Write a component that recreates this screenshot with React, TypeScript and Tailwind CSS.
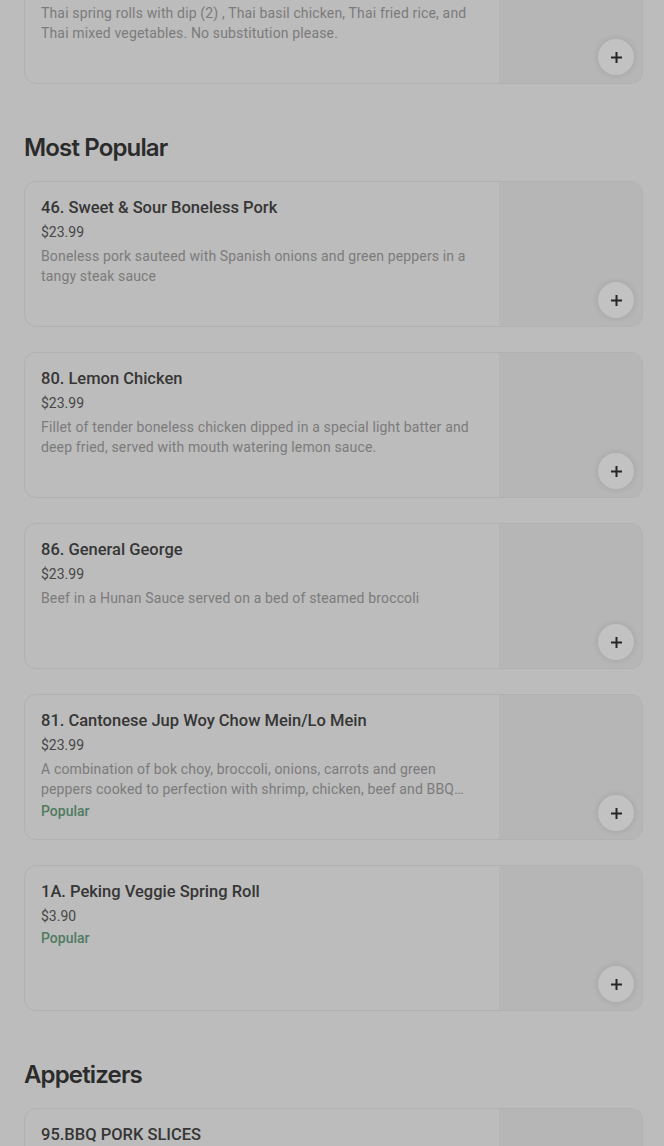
import React from "react";

type Item = {
  name: string;
  price: string;
  description?: string;
  popular?: boolean;
};

const sections: { title?: string; items: Item[] }[] = [
  {
    items: [
      {
        name: "Thai Dinner Combo",
        price: "$45.99",
        description:
          "Thai spring rolls with dip (2) , Thai basil chicken, Thai fried rice, and Thai mixed vegetables. No substitution please.",
      },
    ],
  },
  {
    title: "Most Popular",
    items: [
      {
        name: "46. Sweet & Sour Boneless Pork",
        price: "$23.99",
        description:
          "Boneless pork sauteed with Spanish onions and green peppers in a tangy steak sauce",
      },
      {
        name: "80. Lemon Chicken",
        price: "$23.99",
        description:
          "Fillet of tender boneless chicken dipped in a special light batter and deep fried, served with mouth watering lemon sauce.",
      },
      {
        name: "86. General George",
        price: "$23.99",
        description: "Beef in a Hunan Sauce served on a bed of steamed broccoli",
      },
      {
        name: "81. Cantonese Jup Woy Chow Mein/Lo Mein",
        price: "$23.99",
        description:
          "A combination of bok choy, broccoli, onions, carrots and green peppers cooked to perfection with shrimp, chicken, beef and BBQ pork.",
        popular: true,
      },
      {
        name: "1A. Peking Veggie Spring Roll",
        price: "$3.90",
        popular: true,
      },
    ],
  },
  {
    title: "Appetizers",
    items: [
      {
        name: "95.BBQ PORK SLICES",
        price: "$12.99",
        description: "Sliced barbecued pork served with hot mustard and sesame seeds.",
      },
    ],
  },
];

function PlusIcon() {
  return (
    <svg width="13" height="13" viewBox="0 0 13 13" fill="none">
      <path d="M6.5 1v11M1 6.5h11" stroke="#262626" strokeWidth="2" />
    </svg>
  );
}

function ItemCard({ item }: { item: Item }) {
  return (
    <div className="flex h-[146px] overflow-hidden rounded-xl border border-[#b1b1b1] bg-[#bcbcbc]">
      <div className="min-w-0 flex-1 px-4 pt-4">
        <div className="text-[16.5px] font-medium leading-5 text-[#363636]">{item.name}</div>
        <div className="mt-1 text-[14px] leading-5 text-[#474747]">{item.price}</div>
        {item.description && (
          <div className="mt-1 line-clamp-2 text-[14px] leading-5 tracking-[0.15px] text-[#7b7b7b]">
            {item.description}
          </div>
        )}
        {item.popular && (
          <div className="mt-0.5 text-[14px] font-medium leading-5 text-[#507a61]">
            Popular
          </div>
        )}
      </div>
      <div className="relative w-[143px] shrink-0 bg-[#b6b6b6]">
        <button className="absolute bottom-2 right-2 flex h-9 w-9 items-center justify-center rounded-full bg-[#c2c2c2] shadow-[0_0_6px_rgba(0,0,0,0.12)]">
          <PlusIcon />
        </button>
      </div>
    </div>
  );
}

export default function App() {
  return (
    <div
      className="h-[1146px] overflow-hidden bg-[#bcbcbc]"
      style={{ fontFamily: "Roboto, 'Liberation Sans', sans-serif" }}
    >
      <div className="-mt-[62px] pl-6 pr-[21px]">
        {sections.map((section, si) => (
          <div key={si}>
            {section.title && (
              <h2
                className="mt-12 mb-[17px] text-[24px] font-semibold leading-8 tracking-[-0.85px] text-[#2b2b2b]"
                style={{ fontFamily: "Inter, 'Liberation Sans', sans-serif" }}
              >
                {section.title}
              </h2>
            )}
            <div className="flex flex-col gap-[25px]">
              {section.items.map((item) => (
                <ItemCard key={item.name} item={item} />
              ))}
            </div>
          </div>
        ))}
      </div>
    </div>
  );
}
